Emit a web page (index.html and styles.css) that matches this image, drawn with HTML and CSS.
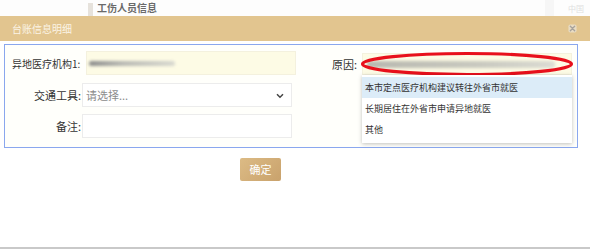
FILE: index.html
```html
<!doctype html>
<html lang="zh-CN">
<head>
	<meta charset="utf-8">
	<title>台账信息明细</title>
	<link rel="stylesheet" href="styles.css">
</head>
<body>
	<div class="topbar">
		<span class="tab-mark"></span>
		<span class="crumb">工伤人员信息</span>
		<span class="faint-bar"></span>
		<span class="faint-text">中国</span>
	</div>
	<div class="dialog">
		<div class="dlg-head">
			<span class="dlg-title">台账信息明细</span>
			<svg class="dlg-close" viewBox="0 0 10 10" width="10" height="10">
				<rect x="0.5" y="0.5" width="9" height="9" rx="2" fill="#e9dcc2"></rect>
				<path d="M2.6 2.6 L7.4 7.4 M7.4 2.6 L2.6 7.4" stroke="#a8a39c" stroke-width="1.5" stroke-linecap="round"></path>
			</svg>
		</div>
		<div class="dlg-body">
			<div class="form-box">
				<div class="col-left">
					<div class="row first">
						<label class="lbl wide">异地医疗机构1:</label>
						<div class="field readonly"><span class="smudge short"></span></div>
					</div>
					<div class="row">
						<label class="lbl">交通工具:</label>
						<div class="field select">
							<span class="placeholder">请选择...</span>
							<svg class="chevron" viewBox="0 0 8 6" width="8" height="6">
								<path d="M1 1.2 L4 4.2 L7 1.2" fill="none" stroke="#444" stroke-width="1.5"></path>
							</svg>
						</div>
					</div>
					<div class="row">
						<label class="lbl">备注:</label>
						<div class="field"></div>
					</div>
				</div>
				<div class="col-right">
					<div class="row">
						<label class="lbl right-lbl">原因:</label>
						<div class="reason">
							<div class="field readonly tall"><span class="smudge long"></span></div>
							<svg class="mark" viewBox="0 0 214 26" width="214" height="26">
								<ellipse cx="107" cy="13" rx="104.5" ry="10.5" fill="none" stroke="#e8101c" stroke-width="3.2"></ellipse>
							</svg>
							<ul class="dropdown">
								<li class="active">本市定点医疗机构建议转往外省市就医</li>
								<li>长期居住在外省市申请异地就医</li>
								<li>其他</li>
							</ul>
						</div>
					</div>
				</div>
			</div>
			<div class="actions">
				<button class="btn-ok">确定</button>
			</div>
		</div>
	</div>
</body>
</html>
```

FILE: styles.css
```css
* {
	box-sizing: border-box;
	font-family: "Noto Sans CJK SC", "Noto Sans", sans-serif;
}
html, body {
	margin: 0;
	padding: 0;
	width: 590px;
	height: 249px;
	overflow: hidden;
	background-color: #FFFFFF;
	color: #333333;
}
body {
	border-bottom: 2px solid #c9c9c9;
}
.topbar {
	display: flex;
	align-items: center;
	height: 16px;
	overflow: hidden;
	background-color: #fdfdfd;
	white-space: nowrap;
}
.topbar > span {
	flex-shrink: 0;
}
.tab-mark {
	width: 5px;
	height: 13px;
	margin: 3px 0 0 88px;
	background-color: #e6e2dc;
}
.crumb {
	margin-left: 4px;
	font-size: 10px;
	font-weight: bold;
	color: #6a6a6a;
	line-height: 16px;
}
.faint-bar {
	width: 9px;
	height: 16px;
	margin-left: 388px;
	background-color: #f6f6f6;
}
.faint-text {
	margin-left: 14px;
	font-size: 8px;
	color: #e0e0e0;
}
.dlg-head {
	display: flex;
	align-items: center;
	justify-content: space-between;
	height: 25px;
	padding: 0 13px 0 12px;
	background-color: #e2c58f;
}
.dlg-title {
	font-size: 10px;
	color: #fbf4e6;
}
.dlg-close {
	display: block;
	width: 9px;
	height: 9px;
}
.dlg-body {
	padding-top: 3px;
}
.form-box {
	display: flex;
	width: 574px;
	height: 104px;
	margin-left: 4px;
	padding-top: 6px;
	border: 1px solid #8aa7ee;
	background-color: #fffffb;
}
.col-left {
	display: flex;
	flex-direction: column;
	width: 291px;
}
.col-right {
	width: 276px;
	padding-top: 2px;
}
.row {
	display: flex;
	align-items: center;
}
.col-left .row + .row {
	margin-top: 8px;
}
.col-left .row:last-child {
	margin-top: 7px;
}
.lbl {
	width: 77px;
	padding-right: 1px;
	font-size: 11px;
	text-align: right;
	color: #333333;
	white-space: nowrap;
}
.lbl.wide {
	width: 81px;
	padding-left: 7px;
	font-size: 10px;
	text-align: left;
}
.right-lbl {
	width: 66px;
	padding-right: 5px;
}
.field {
	position: relative;
	display: flex;
	align-items: center;
	width: 210px;
	height: 24px;
	border: 1px solid #ececec;
	background-color: #FFFFFF;
}
.field.readonly {
	border-color: #f4f1de;
	background-color: #fdfbe5;
}
.field.tall {
	height: 22px;
}
.placeholder {
	padding-left: 3px;
	font-size: 11px;
	color: #8c8c8c;
}
.chevron {
	position: absolute;
	right: 7px;
	top: 9px;
}
.smudge {
	display: block;
	height: 5px;
	border-radius: 3px;
	filter: blur(1.5px);
}
.smudge.short {
	width: 86px;
	margin-left: 2px;
	background: linear-gradient(to right, #8c8c8c, #b9b9b4 40%, #d8d8d0);
}
.smudge.long {
	width: 188px;
	margin-left: 4px;
	height: 7px;
	background: linear-gradient(to right, #b8b8b0, #c9c9c0 60%, #dcdcd3);
}
.reason {
	position: relative;
}
.mark {
	position: absolute;
	left: -2px;
	top: -2px;
}
.dropdown {
	position: absolute;
	left: 0;
	top: 22px;
	width: 210px;
	margin: 0;
	padding: 2px 0 3px;
	list-style: none;
	background-color: #FFFFFF;
	box-shadow: 0 1px 4px rgba(0, 0, 0, 0.25);
}
.dropdown li {
	height: 21px;
	padding-left: 3px;
	font-size: 9px;
	line-height: 21px;
	color: #333333;
	white-space: nowrap;
}
.dropdown li.active {
	background-color: #dcecf8;
}
.actions {
	padding: 7px 0 0 240px;
}
.btn-ok {
	width: 41px;
	height: 23px;
	padding: 0;
	border: none;
	border-radius: 2px;
	background: linear-gradient(135deg, #dcbb85, #c9a26c);
	color: #FFFFFF;
	font-size: 11px;
}
```
